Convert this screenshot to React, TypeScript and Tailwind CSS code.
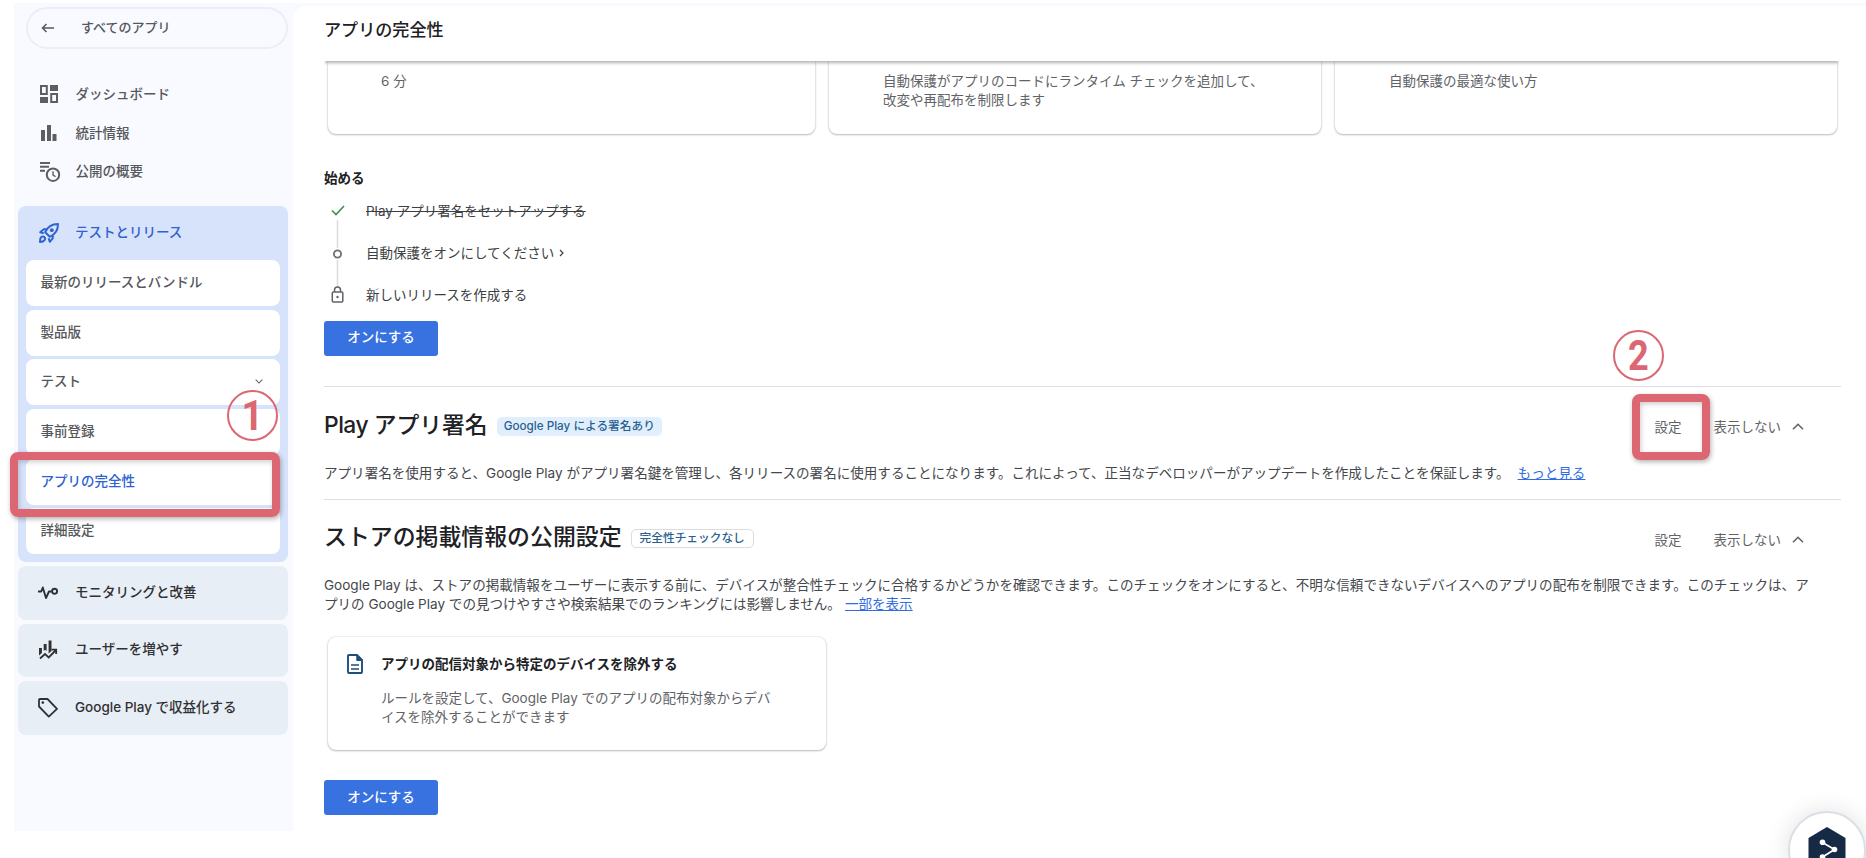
import React from "react";

const G = "#5c5e62";

function DashIcon() {
  return (
    <svg width="18" height="18" viewBox="0 0 18 18" fill="none" stroke={G} strokeWidth="2">
      <rect x="1" y="1" width="5.8" height="8" />
      <rect x="10" y="0" width="8" height="6" fill={G} stroke="none" />
      <rect x="0" y="12" width="8" height="6" fill={G} stroke="none" />
      <rect x="11.2" y="9" width="5.8" height="8" />
    </svg>
  );
}
function BarsIcon() {
  return (
    <svg width="18" height="18" viewBox="0 0 18 18" fill={G}>
      <rect x="1" y="6" width="4" height="11" />
      <rect x="7" y="1" width="4" height="16" />
      <rect x="12.5" y="10" width="4" height="7" />
    </svg>
  );
}
function OverviewIcon() {
  return (
    <svg width="22" height="22" viewBox="0 0 22 22" fill="none" stroke={G} strokeWidth="2">
      <path d="M0 3h10M0 6.800h9M0 10.700h5" />
      <circle cx="13" cy="14.700" r="6.200" />
      <path d="M13 11.200v3.600l2.500 2" strokeWidth="1.4" />
    </svg>
  );
}
function RocketIcon() {
  return (
    <svg width="20" height="20" viewBox="0 0 20 20" fill="none" stroke="#2f62d0" strokeWidth="2" strokeLinejoin="round">
      <path d="M6.2 9.2C8.4 4 12.8 1 19 1c0 6.2-3 10.600-8.200 12.800z" />
      <path d="M7.400 6.200H4.800L1.200 9.200l3.600 1.200M13.800 12.600v2.600L10.800 18.800 9.600 15.200" />
      <path d="M1 19c0-3.600.8-5.400 2.800-5.400s3 2 1.800 3.600S3 19 1 19z" />
      <circle cx="12.800" cy="7.200" r="1.900" fill="#2f62d0" stroke="none" />
    </svg>
  );
}
function MonitorIcon() {
  return (
    <svg width="20" height="14" viewBox="0 0 20 14" fill="none" stroke="#303134" strokeWidth="1.900">
      <path d="M0 5.500h3.200l1.600-4L8 12l3-6.500h2.600" strokeLinejoin="round" />
      <circle cx="16.600" cy="5.200" r="2.500" />
    </svg>
  );
}
function GrowIcon() {
  return (
    <svg width="20" height="20" viewBox="0 0 20 20" fill="#303134">
      <path d="M1 8h2.900v5L1 15.500zM5.700 4h2.900v7L7 9.800l-1.300 1.200zM10.600.5h2.900v10.500l-2.900 2.600z" />
      <path d="M2 18.500L7 14l3.700 3.500L18 10M13.500 9.600H18.200V14" fill="none" stroke="#303134" strokeWidth="1.800" />
    </svg>
  );
}
function TagIcon() {
  return (
    <svg width="20" height="20" viewBox="0 0 20 20" fill="none" stroke="#303134" strokeWidth="1.800" strokeLinejoin="round">
      <path d="M1 2v6.500L10.800 18.600 19 10.800 9.500 1H2Q1 1 1 2z" />
      <circle cx="4.800" cy="4.600" r="1.300" fill="#303134" stroke="none" />
    </svg>
  );
}
function DocIcon() {
  return (
    <svg width="16" height="20" viewBox="0 0 16 20" fill="none" stroke="#1d4f7d" strokeWidth="1.900">
      <path d="M1 2v16q0 1 1 1h12q1 0 1-1V6L10 1H2Q1 1 1 2z" />
      <path d="M9.800 1v5.500H15z" fill="#1d4f7d" strokeWidth="1" />
      <path d="M4 11h8M4 15h8" strokeWidth="1.600" />
    </svg>
  );
}
function ArrowLeft() {
  return (
    <svg width="14" height="10" viewBox="0 0 14 10" fill="none" stroke="#55575b" strokeWidth="1.500">
      <path d="M13 5H1.500M5.500 1l-4 4 4 4" />
    </svg>
  );
}
function Chevron({ up, size = 12 }: { up?: boolean; size?: number }) {
  return (
    <svg width={size} height={size * 0.6} viewBox="0 0 12 7" fill="none" stroke="#5f6368" strokeWidth="1.600">
      <path d={up ? "M1 6.200L6 1.200l5 5" : "M1 1l5 5 5-5"} />
    </svg>
  );
}

const topItems = [
  { icon: <DashIcon />, label: "ダッシュボード" },
  { icon: <BarsIcon />, label: "統計情報" },
  { icon: <OverviewIcon />, label: "公開の概要" },
];
const subItems = ["最新のリリースとバンドル", "製品版", "テスト", "事前登録", "アプリの完全性", "詳細設定"];
const groups = [
  { icon: <MonitorIcon />, label: "モニタリングと改善" },
  { icon: <GrowIcon />, label: "ユーザーを増やす" },
  { icon: <TagIcon />, label: "Google Play で収益化する" },
];

function Sidebar() {
  return (
    <aside className="mt-[3px] ml-[14px] h-[828px] w-[279px] shrink-0 bg-[#f8faff] pt-[4px] pl-[4px] text-[13.5px] font-medium text-[#55575b]">
      <div className="ml-2 flex h-[42px] w-[262px] items-center rounded-full border-2 border-[#ecedf6] pl-[13px]">
        <ArrowLeft />
        <span className="ml-[26px] pb-[2px] text-[13px] leading-5">すべてのアプリ</span>
      </div>
      <nav className="mt-[26px] flex h-[116px] flex-col">
        {topItems.map((t) => (
          <div key={t.label} className="flex h-[38.500px] items-center pl-[21.500px]">
            <span className="flex w-9 items-center">{t.icon}</span>
            <span className="leading-5">{t.label}</span>
          </div>
        ))}
      </nav>
      <section className="mt-[15px] h-[356px] w-[270px] rounded-lg bg-[#d7e3fb] px-2">
        <div className="flex h-[54px] items-center pl-[13px] text-[#2f62d0]">
          <RocketIcon />
          <span className="ml-[16px] pb-[2px] leading-5">テストとリリース</span>
        </div>
        <div className="flex flex-col gap-[3.700px]">
          {subItems.map((s, i) => (
            <div
              key={s}
              className={
                "flex h-[46px] items-center justify-between rounded-lg bg-white pr-[17px] pb-[2px] pl-[14.500px] " +
                (i === 4 ? "text-[#2f62d0]" : "")
              }
            >
              <span className="leading-5">{s}</span>
              {i === 2 && <Chevron size={8} />}
            </div>
          ))}
        </div>
      </section>
      <div className="mt-[4px] flex w-[270px] flex-col gap-[4px] text-[#303134]">
        {groups.map((g) => (
          <div key={g.label} className="flex h-[53.500px] items-center rounded-lg bg-[#e8eef5] pl-[20px]">
            <span className="flex w-[37px] items-center">{g.icon}</span>
            <span className="pb-[2px] leading-5">{g.label}</span>
          </div>
        ))}
      </div>
    </aside>
  );
}

const cardShadow = "shadow-[0_1px_2px_rgba(60,64,67,0.3),0_0_2px_rgba(60,64,67,0.25)]";

function Actions() {
  return (
    <div className="mr-[37px] flex items-center pt-[1px] text-[13.500px] leading-5 text-[#5f6368]">
      <span className="w-[59px]">設定</span>
      <span className="mr-[11px]">表示しない</span>
      <Chevron up />
    </div>
  );
}

function PrimaryButton() {
  return (
    <button className="flex h-[35px] w-[114px] items-center justify-center rounded-[3px] bg-[#3871e0] pb-[1px] text-[13.500px] font-medium text-white">
      オンにする
    </button>
  );
}

function Steps() {
  return (
    <div className="mt-[1px] flex h-[126px] text-[13.500px] text-[#3c4043]">
      <svg width="42" height="126" viewBox="0 0 42 126" fill="none">
        <path d="M8 20.500l4 4 8-8.500" stroke="#3f8f4a" strokeWidth="1.600" />
        <path d="M13.500 30v28M13.500 70v27" stroke="#dadce0" strokeWidth="1.500" />
        <circle cx="13.500" cy="64" r="3.600" stroke="#6b6e73" strokeWidth="1.800" />
        <rect x="8.300" y="102" width="10.500" height="10" rx="1" stroke="#5f6368" strokeWidth="1.500" />
        <path d="M10.500 102v-2a3 3 0 0 1 6 0V102" stroke="#5f6368" strokeWidth="1.500" />
        <circle cx="13.500" cy="107" r="1.200" fill="#5f6368" />
      </svg>
      <div className="flex flex-col">
        <span className="h-[42px] leading-[42px] line-through">Play アプリ署名をセットアップする</span>
        <span className="flex h-[42px] items-center gap-[5px] pt-[1px]">
          自動保護をオンにしてください
          <svg width="5" height="8" viewBox="0 0 5 8" fill="none" stroke="#3c4043" strokeWidth="1.200">
            <path d="M1 1l3 3-3 3" />
          </svg>
        </span>
        <span className="h-[42px] leading-[42px]">新しいリリースを作成する</span>
      </div>
    </div>
  );
}

function Main() {
  return (
    <div className="mt-[3px] flex min-w-0 flex-1 bg-[#f8faff] pt-[3px]">
      <main className="flex flex-1 flex-col rounded-tl-[14px] bg-white pr-[25px] pl-[31px]">
        <header className="relative z-10 mr-[2px] flex h-[54.500px] shrink-0 items-center bg-white pb-[7px] shadow-[0_3px_3px_-1px_rgba(60,64,67,0.4)] [clip-path:inset(0_0_-6px_0)]">
          <h1 className="text-[17.100px] font-medium text-[#202124]">アプリの完全性</h1>
        </header>
        <div className="flex h-[73px] gap-[14px] pl-[4px] text-[13.500px] leading-[19.500px] text-[#5f6368]">
          <div className={"w-[487px] rounded-b-lg bg-white pt-[11px] pl-[53px] " + cardShadow}>6 分</div>
          <div className={"w-[492px] rounded-b-lg bg-white pt-[11px] pl-[54px] " + cardShadow}>
            自動保護がアプリのコードにランタイム チェックを追加して、
            <br />
            改変や再配布を制限します
          </div>
          <div className={"w-[502px] rounded-b-lg bg-white pt-[11px] pl-[54px] " + cardShadow}>自動保護の最適な使い方</div>
        </div>
        <h3 className="mt-[34px] mb-[1px] text-[13.500px] leading-5 font-semibold text-[#202124]">始める</h3>
        <Steps />
        <div className="mt-[5px]">
          <PrimaryButton />
        </div>
        <section className="mt-[30px] h-[113px] border-t border-[#dddee8]">
          <div className="flex h-[80px] items-center justify-between">
            <div className="flex items-center gap-[9px] pb-[1px]">
              <h2 className="pb-[3px] text-[22.800px] leading-8 font-medium text-[#202124]">
                <span className="tracking-[-0.5px]">Play </span>アプリ署名
              </h2>
              <span className="flex h-[19px] items-center rounded-[5px] bg-[#e1effd] px-[7px] pt-[1px] text-[11.700px] font-medium text-[#2a5f90]">
                Google Play による署名あり
              </span>
            </div>
            <Actions />
          </div>
          <p className="mt-[-4px] text-[13.550px] leading-5 whitespace-nowrap text-[#44474b]">
            アプリ署名を使用すると、Google Play がアプリ署名鍵を管理し、各リリースの署名に使用することになります。これによって、正当なデベロッパーがアップデートを作成したことを保証します。
            <span className="ml-[8px] text-[#2f6de0] underline">もっと見る</span>
          </p>
        </section>
        <section className="border-t border-[#dddee8]">
          <div className="flex h-[80px] items-center justify-between">
            <div className="flex items-center gap-[9px] pb-[2px]">
              <h2 className="pb-[3px] text-[22.900px] leading-8 font-medium text-[#202124]">ストアの掲載情報の公開設定</h2>
              <span className="flex h-[19px] items-center rounded-[5px] border border-[#dadce0] px-[8px] text-[11.700px] font-medium text-[#2a5f90]">
                完全性チェックなし
              </span>
            </div>
            <Actions />
          </div>
          <p className="mt-[-4px] text-[13.555px] leading-[19.500px] whitespace-nowrap text-[#44474b]">
            Google Play は、ストアの掲載情報をユーザーに表示する前に、デバイスが整合性チェックに合格するかどうかを確認できます。このチェックをオンにすると、不明な信頼できないデバイスへのアプリの配布を制限できます。このチェックは、ア
            <br />
            プリの Google Play での見つけやすさや検索結果でのランキングには影響しません。
            <span className="ml-[4px] text-[#2f6de0] underline">一部を表示</span>
          </p>
          <div className={"mt-[22px] ml-[4px] flex h-[113px] w-[498px] rounded-lg bg-white pt-[17px] pl-[19px] " + cardShadow}>
            <DocIcon />
            <div className="ml-[18px] text-[13.500px]">
              <h4 className="leading-5 font-semibold text-[#202124]">アプリの配信対象から特定のデバイスを除外する</h4>
              <p className="mt-[15px] leading-[19.500px] text-[#5f6368]">
                ルールを設定して、Google Play でのアプリの配布対象からデバ
                <br />
                イスを除外することができます
              </p>
            </div>
          </div>
          <div className="mt-[30.500px]">
            <PrimaryButton />
          </div>
        </section>
      </main>
    </div>
  );
}

export default function App() {
  return (
    <div className="relative flex h-[858px] w-[1866px] overflow-hidden bg-white font-['Inter','Noto_Sans_CJK_JP',sans-serif]">
      <Sidebar />
      <Main />
      <div className="absolute top-[452px] left-[10px] z-20 h-[65px] w-[270px] rounded-lg border-8 border-[#dc6672] shadow-[1px_2px_5px_rgba(0,0,0,0.3),inset_1px_2px_5px_rgba(0,0,0,0.2)]" />
      <div className="absolute top-[390px] left-[226.500px] z-20 flex size-[51px] items-center justify-center rounded-full border-2 border-[#dc6672] font-['Roboto',sans-serif] text-[43px] leading-none font-bold text-[#dc6672]">
        <span className="scale-x-[0.88]">1</span>
      </div>
      <div className="absolute top-[394px] left-[1632px] z-20 h-[66px] w-[78px] rounded-lg border-8 border-[#dc6672] shadow-[1px_2px_5px_rgba(0,0,0,0.3),inset_1px_2px_5px_rgba(0,0,0,0.2)]" />
      <div className="absolute top-[330px] left-[1612.500px] z-20 flex size-[51px] items-center justify-center rounded-full border-2 border-[#dc6672] font-['Roboto',sans-serif] text-[43px] leading-none font-bold text-[#dc6672]">
        <span className="scale-x-[0.84]">2</span>
      </div>
      <div className="absolute top-[811px] left-[1788px] z-20 flex size-[78px] justify-center rounded-full border-2 border-[#dadee5] bg-white pt-[14px] shadow-[0_0_24px_rgba(0,0,0,0.12)]">
        <svg width="38" height="44" viewBox="0 0 38 44" fill="#172a45">
          <path d="M19 0L37.500 11v22L19 44 .5 33V11z" />
          <path d="M14.500 15.500L26.500 22.500 14.500 30" fill="none" stroke="#fff" strokeWidth="1.800" />
          <circle cx="14.500" cy="15.300" r="2.800" fill="#fff" />
          <circle cx="26.500" cy="22.500" r="2.800" fill="#fff" />
          <circle cx="14.500" cy="30" r="2.800" fill="#fff" />
        </svg>
      </div>
    </div>
  );
}
